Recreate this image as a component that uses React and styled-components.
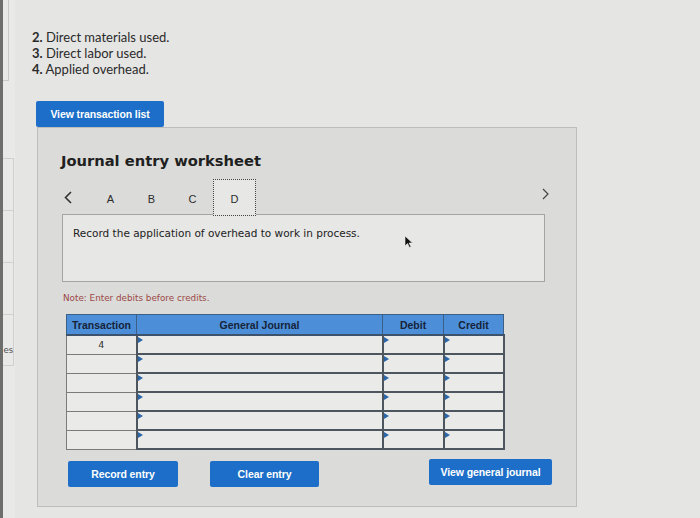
import React from "react";
import styled, { createGlobalStyle } from "styled-components";

const Global = createGlobalStyle`
  html, body { margin: 0; padding: 0; }
  body {
    background: #e5e5e3;
    font-family: "DejaVu Sans", Verdana, sans-serif;
    width: 700px;
    height: 518px;
    overflow: hidden;
  }
`;

const Page = styled.div`
  display: flex;
  width: 700px;
  height: 518px;
  background: #e5e5e3;
`;

const EdgeStrip = styled.div`
  width: 3px;
  background: #6e6e6c;
  flex-shrink: 0;
`;

const Sidebar = styled.div`
  width: 12px;
  flex-shrink: 0;
  display: flex;
  flex-direction: column;
  overflow: hidden;
  background: #e9e9e7;
`;

const SideTop = styled.div`
  height: 80px;
  width: 5px;
  border-right: 1px solid #c9c9c7;
  border-bottom: 1px solid #c9c9c7;
`;

const SideGap = styled.div`
  height: 77px;
`;

const SideItem = styled.div`
  height: 52px;
  width: 11px;
  border-top: 1px solid #cfcfcd;
  border-right: 1px solid #cfcfcd;
  display: flex;
  align-items: flex-end;
  justify-content: flex-end;
  padding-bottom: 10px;
  box-sizing: border-box;
  font-family: "Lato", sans-serif;
  font-size: 10px;
  color: #555;
  white-space: nowrap;
  &:last-child { border-bottom: 1px solid #cfcfcd; }
`;

const Main = styled.div`
  flex: 1;
  padding: 29px 0 0 17px;
  display: flex;
  flex-direction: column;
  align-items: flex-start;
`;

const List = styled.ol`
  list-style: none;
  margin: 0;
  padding: 0;
  font-family: "Lato", "Open Sans", sans-serif;
  font-size: 13px;
  line-height: 16px;
  color: #2a2a2a;
`;

const ListItem = styled.li`
  b { font-weight: 700; }
`;

const BlueButton = styled.button`
  background: #1c6ec9;
  color: #fff;
  border: none;
  border-radius: 2px;
  font-family: "Liberation Sans", Arial, sans-serif;
  font-weight: 700;
  font-size: 10.5px;
  height: 26px;
  width: ${(p) => p.$w}px;
  padding: 0;
  cursor: pointer;
  letter-spacing: -0.1px;
`;

const TopButton = styled(BlueButton)`
  margin: 24px 0 0 4px;
`;

const Panel = styled.section`
  margin-left: 5px;
  width: 540px;
  box-sizing: border-box;
  border: 1px solid #bdbdbb;
  background: #dbdbd9;
  padding: 23px 24px 19px 23px;
  display: flex;
  flex-direction: column;
`;

const Title = styled.h2`
  margin: 0;
  font-family: "DejaVu Sans", Verdana, sans-serif;
  font-weight: 700;
  font-size: 14.7px;
  line-height: 20px;
  color: #1f1f1f;
`;

const NavRow = styled.div`
  margin-top: 8px;
  height: 37px;
  display: flex;
  align-items: stretch;
  position: relative;
  z-index: 1;
  margin-bottom: -2px;
`;

const Arrow = styled.div`
  width: ${(p) => p.$w}px;
  display: flex;
  align-items: center;
  justify-content: ${(p) => (p.$end ? "flex-end" : "flex-start")};
  padding-left: ${(p) => (p.$end ? 0 : 3)}px;
  margin-left: ${(p) => (p.$end ? "auto" : "0")};
  margin-right: ${(p) => (p.$end ? 3 : 0)}px;
  margin-top: ${(p) => (p.$end ? -8 : 0)}px;
  color: #333;
  svg { display: block; }
`;

const Tab = styled.div`
  width: ${(p) => (p.$active ? 43 : 41)}px;
  display: flex;
  align-items: center;
  justify-content: center;
  font-family: "Liberation Sans", Arial, sans-serif;
  font-size: 11px;
  color: #2b2b2b;
  box-sizing: border-box;
  padding-top: 2px;
  ${(p) =>
    p.$active &&
    `
    background: #e7e7e5;
    border: 1px dotted #444;
  `}
`;

const InfoBox = styled.div`
  margin: 0 7px 0 1px;
  height: 68px;
  box-sizing: border-box;
  border: 1px solid #a3a3a1;
  background: #e7e7e5;
  padding: 12px 10px 0 10px;
  font-family: "DejaVu Sans", Verdana, sans-serif;
  font-size: 10.5px;
  color: #222;
  position: relative;
`;

const Cursor = styled.svg`
  position: absolute;
  left: 341px;
  top: 20px;
`;

const Note = styled.div`
  margin-top: 10px;
  font-family: "DejaVu Sans", Verdana, sans-serif;
  font-size: 8.8px;
  line-height: 12px;
  color: #9c4846;
  padding-left: 2px;
`;

const Table = styled.table`
  margin: 10px 0 0 5px;
  width: 437px;
  border-collapse: collapse;
  table-layout: fixed;
`;

const Th = styled.th`
  height: 19px;
  padding: 0;
  background: #4c8fd8;
  border: 1px solid #3b5f86;
  border-bottom: 2px solid #3d536b;
  font-family: "Liberation Sans", Arial, sans-serif;
  font-weight: 700;
  font-size: 10.5px;
  color: #16233a;
  text-align: center;
`;

const Td = styled.td`
  height: 19px;
  padding: 0;
  background: #eaeae8;
  box-sizing: border-box;
  border: ${(p) => (p.$input ? "2px solid #4d565f" : "1px solid #7b7b79")};
  font-family: "DejaVu Sans", Verdana, sans-serif;
  font-size: 9.5px;
  color: #333;
  text-align: center;
  position: relative;
  ${(p) =>
    p.$input &&
    `
    &::before {
      content: "";
      position: absolute;
      left: 0;
      top: 1px;
      border-top: 3px solid transparent;
      border-bottom: 3px solid transparent;
      border-left: 5px solid #2b66a8;
    }
  `}
`;

const ButtonRow = styled.div`
  margin-top: 11px;
  padding-left: 7px;
  display: flex;
  gap: 32px;
`;

const RightButton = styled(BlueButton)`
  margin-left: auto;
  margin-top: -2px;
`;

const rows = ["4", "", "", "", "", ""];

export default function App() {
  return (
    <>
      <Global />
      <Page>
        <EdgeStrip />
        <Sidebar>
          <SideTop />
          <SideGap />
          <SideItem />
          <SideItem />
          <SideItem />
          <SideItem>es</SideItem>
        </Sidebar>
        <Main>
          <List>
            <ListItem>
              <b>2.</b> Direct materials used.
            </ListItem>
            <ListItem>
              <b>3.</b> Direct labor used.
            </ListItem>
            <ListItem>
              <b>4.</b> Applied overhead.
            </ListItem>
          </List>
          <TopButton $w={128}>View transaction list</TopButton>
          <Panel>
            <Title>Journal entry worksheet</Title>
            <NavRow>
              <Arrow $w={26}>
                <svg width="8" height="13" viewBox="0 0 8 13">
                  <path d="M7 1 L1.5 6.5 L7 12" fill="none" stroke="#333" strokeWidth="1.6" />
                </svg>
              </Arrow>
              <Tab>A</Tab>
              <Tab>B</Tab>
              <Tab>C</Tab>
              <Tab $active>D</Tab>
              <Arrow $w={10} $end>
                <svg width="7" height="12" viewBox="0 0 7 12">
                  <path d="M1 1 L6 6 L1 11" fill="none" stroke="#444" strokeWidth="1.2" />
                </svg>
              </Arrow>
            </NavRow>
            <InfoBox>
              Record the application of overhead to work in process.
              <Cursor width="9" height="13" viewBox="0 0 9 13">
                <path d="M1 1 L1 11 L3.5 8.5 L5.5 12.5 L7 11.8 L5 8 L8.5 8 Z" fill="#111" stroke="#eee" strokeWidth="0.6" />
              </Cursor>
            </InfoBox>
            <Note>Note: Enter debits before credits.</Note>
            <Table>
              <colgroup>
                <col style={{ width: "70px" }} />
                <col style={{ width: "246px" }} />
                <col style={{ width: "61px" }} />
                <col style={{ width: "60px" }} />
              </colgroup>
              <thead>
                <tr>
                  <Th>Transaction</Th>
                  <Th>General Journal</Th>
                  <Th>Debit</Th>
                  <Th>Credit</Th>
                </tr>
              </thead>
              <tbody>
                {rows.map((r, i) => (
                  <tr key={i}>
                    <Td>{r}</Td>
                    <Td $input />
                    <Td $input />
                    <Td $input />
                  </tr>
                ))}
              </tbody>
            </Table>
            <ButtonRow>
              <BlueButton $w={110}>Record entry</BlueButton>
              <BlueButton $w={109}>Clear entry</BlueButton>
              <RightButton $w={123}>View general journal</RightButton>
            </ButtonRow>
          </Panel>
        </Main>
      </Page>
    </>
  );
}
